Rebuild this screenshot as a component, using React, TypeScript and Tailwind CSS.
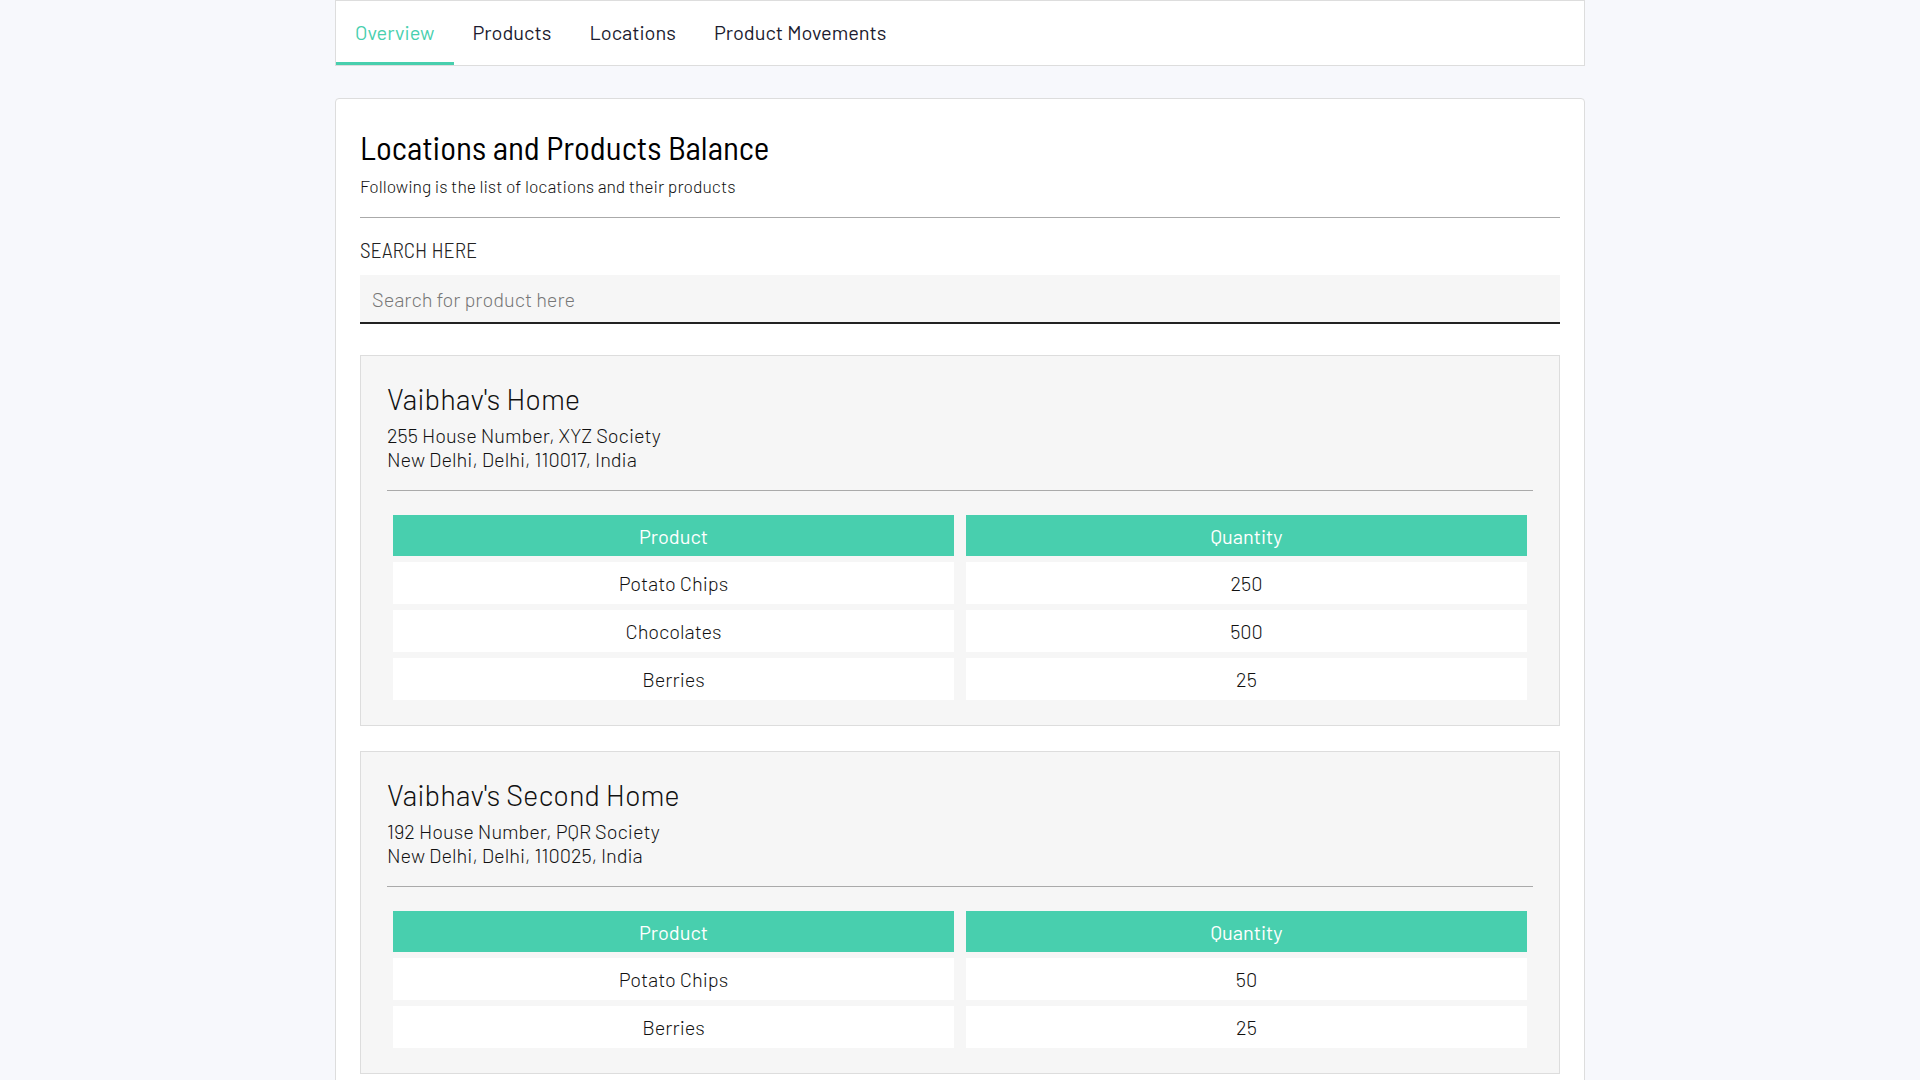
const tabs = ["Overview", "Products", "Locations", "Product Movements"];

const locations = [
  {
    name: "Vaibhav's Home",
    line1: "255 House Number, XYZ Society",
    line2: "New Delhi, Delhi, 110017, India",
    items: [
      { product: "Potato Chips", qty: 250 },
      { product: "Chocolates", qty: 500 },
      { product: "Berries", qty: 25 },
    ],
  },
  {
    name: "Vaibhav's Second Home",
    line1: "192 House Number, PQR Society",
    line2: "New Delhi, Delhi, 110025, India",
    items: [
      { product: "Potato Chips", qty: 50 },
      { product: "Berries", qty: 25 },
    ],
  },
];

function Nav() {
  return (
    <nav className="flex h-[66px] border border-[#dddddd] bg-white">
      {tabs.map((t, i) => (
        <a
          key={t}
          href="#"
          className={
            i === 0
              ? "flex items-center px-[19px] border-b-[3px] border-[#48cfae] pt-px text-[20px] text-[#48cfae]"
              : "flex items-center px-[19px] border-b-[3px] border-transparent pt-px text-[20px] text-[#1b1b2f]"
          }
        >
          {t}
        </a>
      ))}
    </nav>
  );
}

type Loc = (typeof locations)[number];

function LocationCard({ loc }: { loc: Loc }) {
  return (
    <div className="border border-[#dddddd] bg-[#f6f6f6] px-[26px] pt-[25px] pb-[25px]">
      <h3 className="text-[29px] font-light leading-[36px] text-[#111]">{loc.name}</h3>
      <p className="mt-[6px] text-[20px] font-light leading-[24px] text-[#111]">
        {loc.line1}
        <br />
        {loc.line2}
      </p>
      <hr className="mt-[19px] border-t border-[#aaaaaa]" />
      <div className="mt-[24px] grid grid-cols-2 gap-x-3 gap-y-1.5 px-1.5 text-[20px] font-light">
        <div className="flex h-[41px] items-center justify-center bg-[#48cfae] font-normal text-white">Product</div>
        <div className="flex h-[41px] items-center justify-center bg-[#48cfae] font-normal text-white">Quantity</div>
        {loc.items.map((it) => (
          <>
            <div key={it.product + "p"} className="flex h-[42px] items-center justify-center bg-white text-[#111]">
              {it.product}
            </div>
            <div key={it.product + "q"} className="flex h-[42px] items-center justify-center bg-white text-[#111]">
              {it.qty}
            </div>
          </>
        ))}
      </div>
    </div>
  );
}

export default function App() {
  return (
    <div className="min-h-screen bg-[#f7f8fc] font-['Barlow',_'Roboto',_sans-serif]">
      <div className="mx-auto w-[1250px]">
        <Nav />
        <main className="mt-8 rounded border border-[#dddddd] bg-white px-6 pt-[28px] pb-8">
          <h1 className="font-['Barlow_Semi_Condensed',_'Barlow_Condensed',_sans-serif] text-[33px] leading-[40px] text-black">
            Locations and Products Balance
          </h1>
          <p className="mt-[7px] text-[17.5px] font-light leading-6 text-[#111]">
            Following is the list of locations and their products
          </p>
          <hr className="mt-[19px] border-t border-[#aaaaaa]" />
          <label className="mt-[19px] block font-['Barlow_Semi_Condensed',_'Barlow_Condensed',_sans-serif] text-[21.5px] font-light leading-6 text-[#222]">
            SEARCH HERE
          </label>
          <input
            className="mt-[14px] h-[49px] w-full border-b-2 border-[#222] bg-[#f6f6f6] px-3 text-[20px] font-light text-[#222] placeholder:text-[#777] outline-none"
            placeholder="Search for product here"
          />
          <div className="mt-[31px] flex flex-col gap-[25px]">
            {locations.map((l) => (
              <LocationCard key={l.name} loc={l} />
            ))}
          </div>
        </main>
      </div>
    </div>
  );
}
